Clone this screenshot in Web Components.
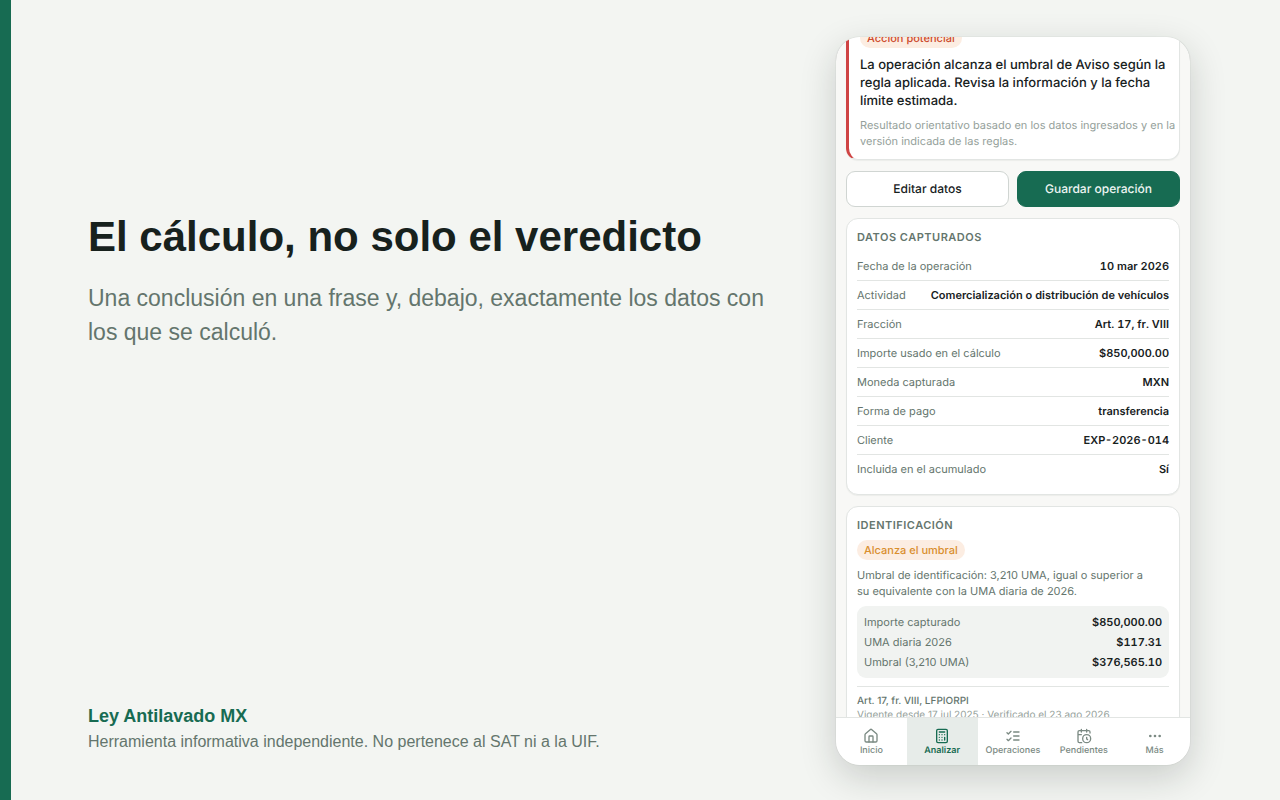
<!DOCTYPE html>
<html lang="es">
<head>
<meta charset="utf-8">
<meta name="viewport" content="width=device-width, initial-scale=1">
<title>Ley Antilavado MX</title>
<style>
  :root {
    --green: #176b52;
    --ink: #17211d;
    --muted: #64756d;
    --faint: #95a19b;
    --line: #e2e5e3;
    --page: #f3f5f2;
    --screen: #f8f8f6;
  }
  body { margin: 0; background: var(--page); color: var(--ink); font-family: "Liberation Sans", Arial, sans-serif; }
</style>
</head>
<body>
<promo-page>
  <promo-copy>
    <span slot="title">El cálculo, no solo el veredicto</span>
    <span slot="lead">Una conclusión en una frase y, debajo, exactamente los datos con los que se calculó.</span>
    <span slot="brand">Ley Antilavado MX</span>
    <span slot="note">Herramienta informativa independiente. No pertenece al SAT ni a la UIF.</span>
  </promo-copy>
  <phone-frame>
    <result-card>
      <tag-badge slot="badge" tone="alert">Acción potencial</tag-badge>
      <span slot="title">La operación alcanza el umbral de Aviso según la regla aplicada. Revisa la información y la fecha límite estimada.</span>
      <span slot="note">Resultado orientativo basado en los datos ingresados y en la versión indicada de las reglas.</span>
    </result-card>
    <action-bar>
      <app-button>Editar datos</app-button>
      <app-button variant="primary">Guardar operación</app-button>
    </action-bar>
    <info-card heading="DATOS CAPTURADOS">
      <data-list rows='[["Fecha de la operación","10 mar 2026"],["Actividad","Comercialización o distribución de vehículos"],["Fracción","Art. 17, fr. VIII"],["Importe usado en el cálculo","$850,000.00"],["Moneda capturada","MXN"],["Forma de pago","transferencia"],["Cliente","EXP-2026-014"],["Incluida en el acumulado","Sí"]]'></data-list>
    </info-card>
    <info-card heading="IDENTIFICACIÓN">
      <threshold-detail>
        <tag-badge slot="badge" tone="warn">Alcanza el umbral</tag-badge>
        <span slot="text">Umbral de identificación: 3,210 UMA, igual o superior a su equivalente con la UMA diaria de 2026.</span>
        <data-list slot="figures" compact rows='[["Importe capturado","$850,000.00"],["UMA diaria 2026","$117.31"],["Umbral (3,210 UMA)","$376,565.10"]]'></data-list>
        <span slot="source">Art. 17, fr. VIII, LFPIORPI</span>
        <span slot="validity">Vigente desde 17 jul 2025 · Verificado el 23 ago 2026</span>
      </threshold-detail>
    </info-card>
    <tab-bar slot="tabs">
      <tab-item icon="house">Inicio</tab-item>
      <tab-item icon="calculator" active>Analizar</tab-item>
      <tab-item icon="checks">Operaciones</tab-item>
      <tab-item icon="calendar">Pendientes</tab-item>
      <tab-item icon="more">Más</tab-item>
    </tab-bar>
  </phone-frame>
</promo-page>

<script>
  const define = (name, render) => customElements.define(name, class extends HTMLElement {
    connectedCallback() {
      if (!this.shadowRoot) this.attachShadow({ mode: "open" }).innerHTML = render(this);
    }
  });

  define("promo-page", () => `
    <style>
      :host { display: block; }
      main { box-sizing: border-box; height: 100vh; display: flex; justify-content: space-between; gap: 40px;
        border-left: 11px solid var(--green); padding: 37px 90px 35px 77px; }
    </style>
    <main><slot></slot></main>`);

  define("promo-copy", () => `
    <style>
      :host { flex: 1; max-width: 700px; display: flex; flex-direction: column; justify-content: space-between; }
      h1, p { margin: 0; }
      header { padding-top: 176px; }
      h1 { font-size: 42px; line-height: 48px; font-weight: 700; }
      .lead { margin-top: 20px; font-size: 23px; line-height: 34px; color: var(--muted); }
      footer { padding-bottom: 11px; color: var(--muted); }
      .brand { font-size: 18px; line-height: 28px; font-weight: 700; color: var(--green); }
      .note { font-size: 16px; line-height: 24px; }
    </style>
    <header>
      <h1><slot name="title"></slot></h1>
      <p class="lead"><slot name="lead"></slot></p>
    </header>
    <footer>
      <p class="brand"><slot name="brand"></slot></p>
      <p class="note"><slot name="note"></slot></p>
    </footer>`);

  define("phone-frame", () => `
    <style>
      :host { box-sizing: border-box; flex: none; width: 354px; display: flex; flex-direction: column; overflow: hidden;
        border-radius: 24px; background: var(--screen); font-family: Inter, sans-serif; text-rendering: geometricPrecision;
        box-shadow: 0 0 1px rgba(23, 33, 29, .3), 0 12px 36px rgba(23, 33, 29, .19); }
      .screen { flex: 1; min-height: 0; overflow: hidden; }
      .content { display: flex; flex-direction: column; gap: 11px; margin-top: -21px; padding: 0 10px; }
    </style>
    <div class="screen"><div class="content"><slot></slot></div></div>
    <slot name="tabs"></slot>`);

  define("result-card", () => `
    <style>
      :host { display: block; box-sizing: border-box; background: #fff; border: 1px solid var(--line); border-left: 3px solid #cf4444;
        border-radius: 12px; padding: 11px 2px 10px 11px; box-shadow: 0 1px 1px rgba(23, 33, 29, .05); }
      h2, p { margin: 0; }
      h2 { margin-top: 8px; font-size: 13px; line-height: 18px; font-weight: 500; }
      p { margin-top: 7px; font-size: 11px; line-height: 16px; color: var(--faint); }
    </style>
    <slot name="badge"></slot>
    <h2><slot name="title"></slot></h2>
    <p><slot name="note"></slot></p>`);

  define("tag-badge", () => `
    <style>
      :host { display: block; width: fit-content; padding: 0 7px; border-radius: 10px; background: #fcede2;
        font-size: 11px; line-height: 20px; font-weight: 500; color: #d98f2e; }
      :host([tone="alert"]) { color: #cc4a2c; }
    </style>
    <slot></slot>`);

  define("action-bar", () => `
    <style>:host { display: grid; grid-template-columns: 1fr 1fr; gap: 8px; }</style>
    <slot></slot>`);

  define("app-button", () => `
    <style>
      :host { display: block; }
      button { display: block; box-sizing: border-box; width: 100%; height: 36px; margin: 0; padding: 0 8px; border: 1px solid #d0d5d2;
        border-radius: 9px; background: #fff; color: var(--ink); font: 500 12px/16px Inter, sans-serif; text-rendering: inherit; }
      :host([variant="primary"]) button { background: var(--green); border-color: var(--green); color: #eef5f2; }
    </style>
    <button type="button"><slot></slot></button>`);

  define("info-card", el => `
    <style>
      :host { display: block; box-sizing: border-box; background: #fff; border: 1px solid var(--line); border-radius: 12px;
        padding: 10px; box-shadow: 0 1px 1px rgba(23, 33, 29, .05); }
      h2 { margin: 0 0 7px; font-size: 11px; line-height: 16px; font-weight: 600; letter-spacing: .5px; color: var(--muted); }
    </style>
    <h2>${el.getAttribute("heading")}</h2>
    <slot></slot>`);

  define("data-list", el => `
    <style>
      :host { display: block; }
      dl, dd { margin: 0; }
      div { display: flex; justify-content: space-between; gap: 12px; font-size: 11px; line-height: 28px; border-bottom: 1px solid var(--line); }
      div:last-child { border-bottom-color: transparent; }
      dt { color: var(--muted); white-space: nowrap; }
      dd { font-weight: 600; text-align: right; white-space: nowrap; font-variant-numeric: tabular-nums; }
      :host([compact]) dl { padding: 6px 7px; border-radius: 9px; background: #f1f3f1; }
      :host([compact]) div { line-height: 20px; border: 0; }
    </style>
    <dl>${JSON.parse(el.getAttribute("rows")).map(([k, v]) => `<div><dt>${k}</dt><dd>${v}</dd></div>`).join("")}</dl>`);

  define("threshold-detail", () => `
    <style>
      :host { display: block; }
      p { margin: 0; color: var(--muted); }
      .text { margin: 7px 0 7px; max-width: 296px; font-size: 11px; line-height: 16px; }
      .law { margin-top: 8px; padding-top: 7px; border-top: 1px solid var(--line); font-size: 10px; line-height: 14px; }
      .law p:first-child { font-weight: 500; }
      .law p:last-child { color: var(--faint); }
    </style>
    <slot name="badge"></slot>
    <p class="text"><slot name="text"></slot></p>
    <slot name="figures"></slot>
    <div class="law">
      <p><slot name="source"></slot></p>
      <p><slot name="validity"></slot></p>
    </div>`);

  define("tab-bar", () => `
    <style>
      :host { display: block; flex: none; border-top: 1px solid var(--line); background: #fff; }
      nav { display: grid; grid-template-columns: repeat(5, 1fr); }
    </style>
    <nav><slot></slot></nav>`);

  const icons = {
    house: '<path d="M15 21v-8a1 1 0 0 0-1-1h-4a1 1 0 0 0-1 1v8"/><path d="M3 10a2 2 0 0 1 .709-1.528l7-5.999a2 2 0 0 1 2.582 0l7 5.999A2 2 0 0 1 21 10v9a2 2 0 0 1-2 2H5a2 2 0 0 1-2-2z"/>',
    calculator: '<rect width="16" height="20" x="4" y="2" rx="2"/><path d="M8 6h8M16 14v4M16 10h.01M12 10h.01M8 10h.01M12 14h.01M8 14h.01M12 18h.01M8 18h.01"/>',
    checks: '<path d="m3 17 2 2 4-4M3 7l2 2 4-4M13 6h8M13 12h8M13 18h8"/>',
    calendar: '<path d="M21 7.5V6a2 2 0 0 0-2-2H5a2 2 0 0 0-2 2v14a2 2 0 0 0 2 2h3.5M16 2v4M8 2v4M3 10h5M17.5 17.5 16 16.3V14"/><circle cx="16" cy="16" r="6"/>',
    more: '<circle cx="12" cy="12" r="1"/><circle cx="19" cy="12" r="1"/><circle cx="5" cy="12" r="1"/>'
  };

  define("tab-item", el => `
    <style>
      :host { display: block; min-width: 0; }
      a { display: flex; flex-direction: column; align-items: center; height: 47px; box-sizing: border-box; padding-top: 10px; gap: 1px;
        color: #7b8a83; font-size: 9px; line-height: 12px; font-weight: 500; text-decoration: none; }
      :host([active]) a { background: #e7ece9; color: var(--green); font-weight: 600; }
      svg { width: 16px; height: 16px; fill: none; stroke: currentColor; stroke-width: 2; stroke-linecap: round; stroke-linejoin: round; }
    </style>
    <a href="#"${el.hasAttribute("active") ? ' aria-current="page"' : ""}><svg viewBox="0 0 24 24" aria-hidden="true">${icons[el.getAttribute("icon")]}</svg><slot></slot></a>`);
</script>
</body>
</html>
